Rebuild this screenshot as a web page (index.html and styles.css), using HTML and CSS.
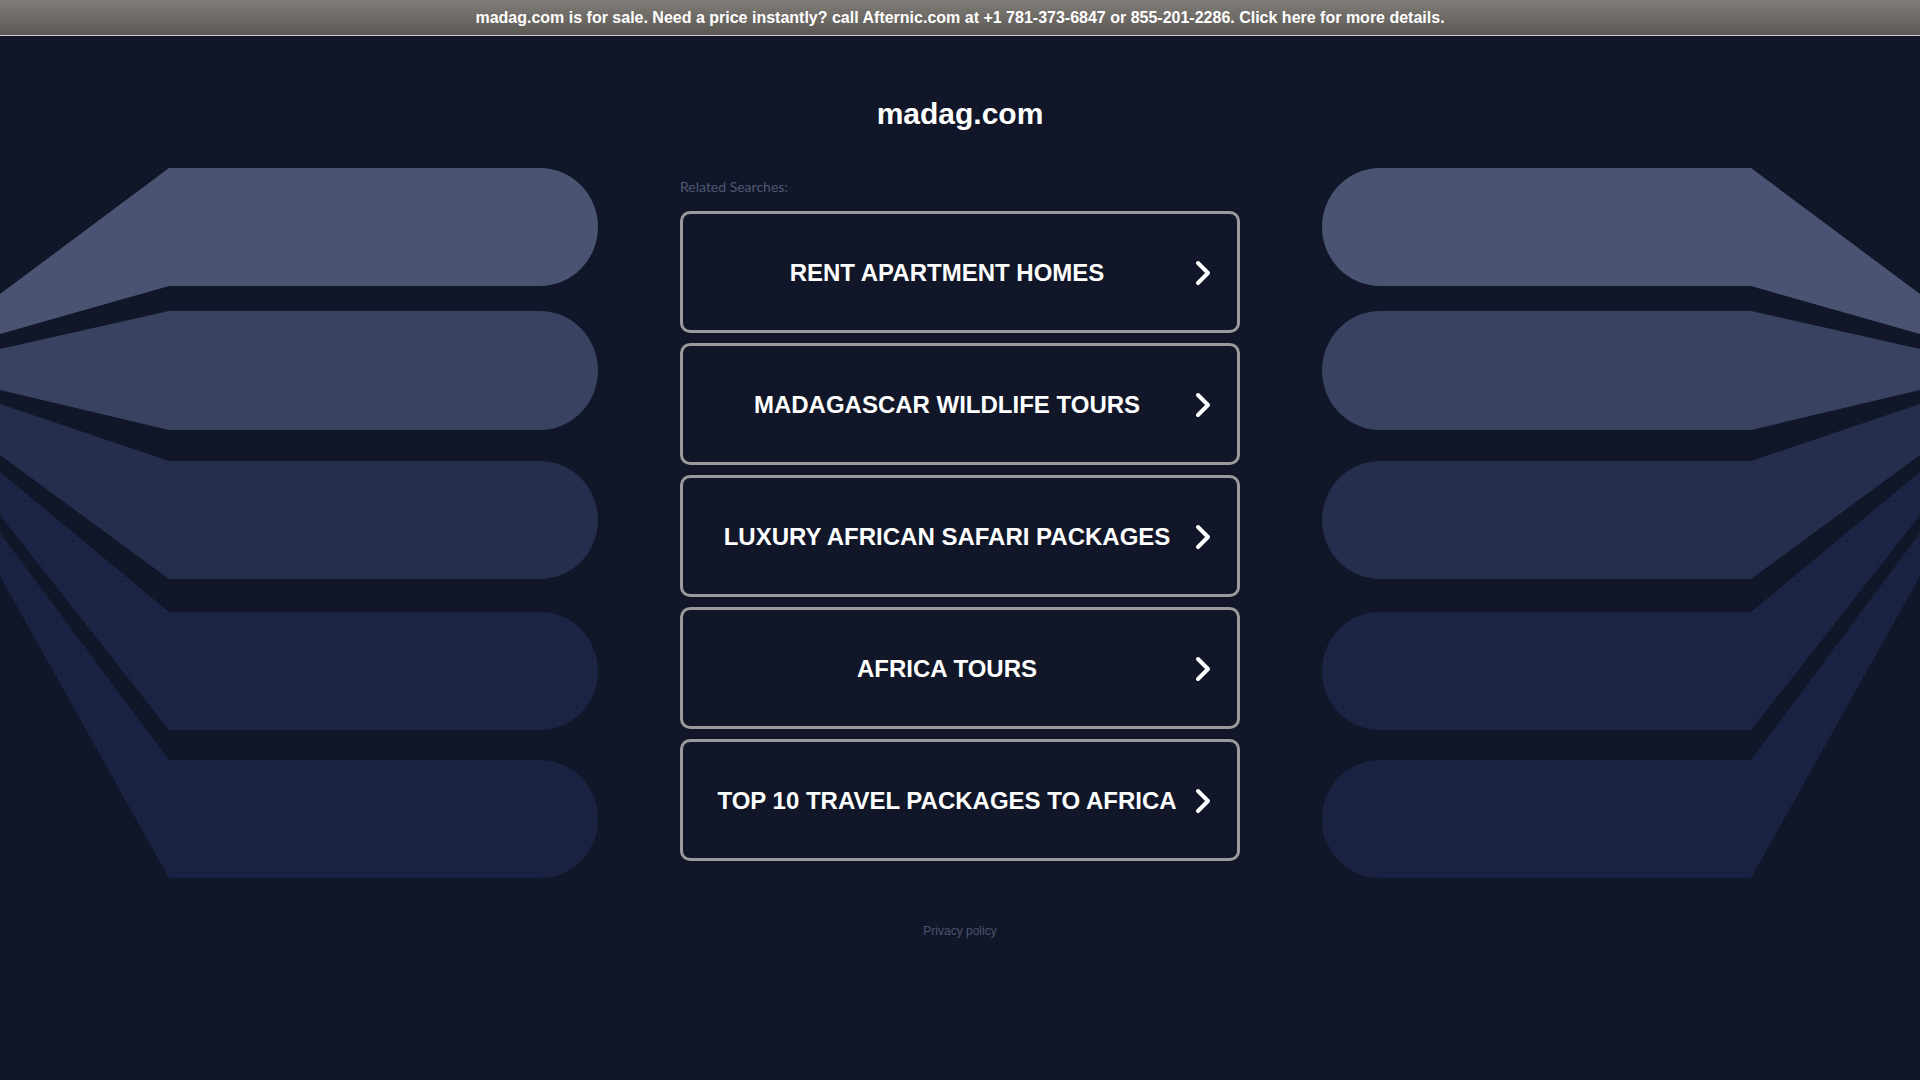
FILE: index.html
```html
<!DOCTYPE html>
<html>
<head>
  <meta charset="utf-8">
  <title>madag.com</title>
  <link rel="stylesheet" href="styles.css">
</head>
<body>
  <div class="sale-bar">
    <a href="#">madag.com is for sale. Need a price instantly? call Afternic.com at +1 781-373-6847 or 855-201-2286. Click here for more details.</a>
  </div>

  <div class="page">
    <svg class="fan" viewBox="0 36 680 900" width="680" height="900">
      <defs>
        <pattern id="dots4" width="4" height="4" patternUnits="userSpaceOnUse">
          <rect width="4" height="4" fill="#1c2546"/>
          <circle cx="1" cy="1" r="0.7" fill="#141b35"/>
        </pattern>
        <pattern id="dots5" width="4" height="4" patternUnits="userSpaceOnUse">
          <rect width="4" height="4" fill="#1a2343"/>
          <circle cx="1" cy="1" r="0.7" fill="#131a33"/>
        </pattern>
        <g id="fan-shapes">
          <path fill="#4a5472" d="M0 294 L169 168 L540 168 A58 59 0 0 1 540 286 L169 286 L0 334 Z"/>
          <path fill="#394260" d="M0 349 L169 311 L540 311 A58 59.5 0 0 1 540 430 L169 430 L0 390 Z"/>
          <path fill="#252e4c" d="M0 404 L169 461 L540 461 A58 59 0 0 1 540 579 L169 579 L0 455 Z"/>
          <path fill="url(#dots4)" d="M0 472 L169 612 L540 612 A58 59 0 0 1 540 730 L169 730 L0 515 Z"/>
          <path fill="url(#dots5)" d="M0 533 L169 760 L540 760 A58 59 0 0 1 540 878 L169 878 L0 576 Z"/>
        </g>
      </defs>
      <use href="#fan-shapes"/>
    </svg>

    <div class="content">
      <h1>madag.com</h1>
      <div class="related">Related Searches:</div>

      <div class="links">
        <a class="link" href="#">
          <span>RENT APARTMENT HOMES</span>
          <svg class="chevron" viewBox="0 0 16 26" width="16" height="26"><path d="M3 3 L13 13 L3 23"/></svg>
        </a>
        <a class="link" href="#">
          <span>MADAGASCAR WILDLIFE TOURS</span>
          <svg class="chevron" viewBox="0 0 16 26" width="16" height="26"><path d="M3 3 L13 13 L3 23"/></svg>
        </a>
        <a class="link" href="#">
          <span>LUXURY AFRICAN SAFARI PACKAGES</span>
          <svg class="chevron" viewBox="0 0 16 26" width="16" height="26"><path d="M3 3 L13 13 L3 23"/></svg>
        </a>
        <a class="link" href="#">
          <span>AFRICA TOURS</span>
          <svg class="chevron" viewBox="0 0 16 26" width="16" height="26"><path d="M3 3 L13 13 L3 23"/></svg>
        </a>
        <a class="link" href="#">
          <span>TOP 10 TRAVEL PACKAGES TO AFRICA</span>
          <svg class="chevron" viewBox="0 0 16 26" width="16" height="26"><path d="M3 3 L13 13 L3 23"/></svg>
        </a>
      </div>

      <div class="privacy"><a href="#">Privacy policy</a></div>
    </div>

    <svg class="fan fan-right" viewBox="0 36 680 900" width="680" height="900">
      <use href="#fan-shapes"/>
    </svg>
  </div>
</body>
</html>
```

FILE: styles.css
```css
body {
  margin: 0;
  background-color: #111729;
  font-family: "Liberation Sans", Arial, sans-serif;
}

a {
  text-decoration: none;
}

.sale-bar {
  height: 35px;
  line-height: 35px;
  border-bottom: 1px solid #cfcdcb;
  background: linear-gradient(#807c78, #5c5854);
  text-align: center;
  font-size: 16px;
  font-weight: bold;
}
.sale-bar a {
  color: #fff;
}

.page {
  display: grid;
  grid-template-columns: 1fr 560px 1fr;
}

.fan {
  display: block;
}
.fan-right {
  transform: scaleX(-1);
}

.content {
  display: flex;
  flex-direction: column;
}

h1 {
  margin: 60px 0 45px;
  line-height: 36px;
  font-size: 30px;
  text-align: center;
  color: #fff;
}

.related {
  margin-bottom: 14px;
  line-height: 20px;
  font-family: Lato, "Open Sans", sans-serif;
  font-size: 14px;
  color: #4f5773;
}

.links {
  display: flex;
  flex-direction: column;
  gap: 10px;
}

.link {
  box-sizing: border-box;
  height: 122px;
  display: flex;
  align-items: center;
  gap: 1px;
  padding: 2px 26px 0 17px;
  border: 3px solid #9b9b9b;
  border-radius: 10px;
  color: #fff;
  font-size: 24px;
  font-weight: bold;
}
.link span {
  flex: 1;
  text-align: center;
}

.chevron {
  flex: none;
}
.chevron path {
  fill: none;
  stroke: #fff;
  stroke-width: 4;
  stroke-linecap: round;
  stroke-linejoin: round;
}

.privacy {
  margin-top: 62px;
  line-height: 16px;
  text-align: center;
  font-size: 12px;
}
.privacy a {
  color: #4d546f;
}
```
